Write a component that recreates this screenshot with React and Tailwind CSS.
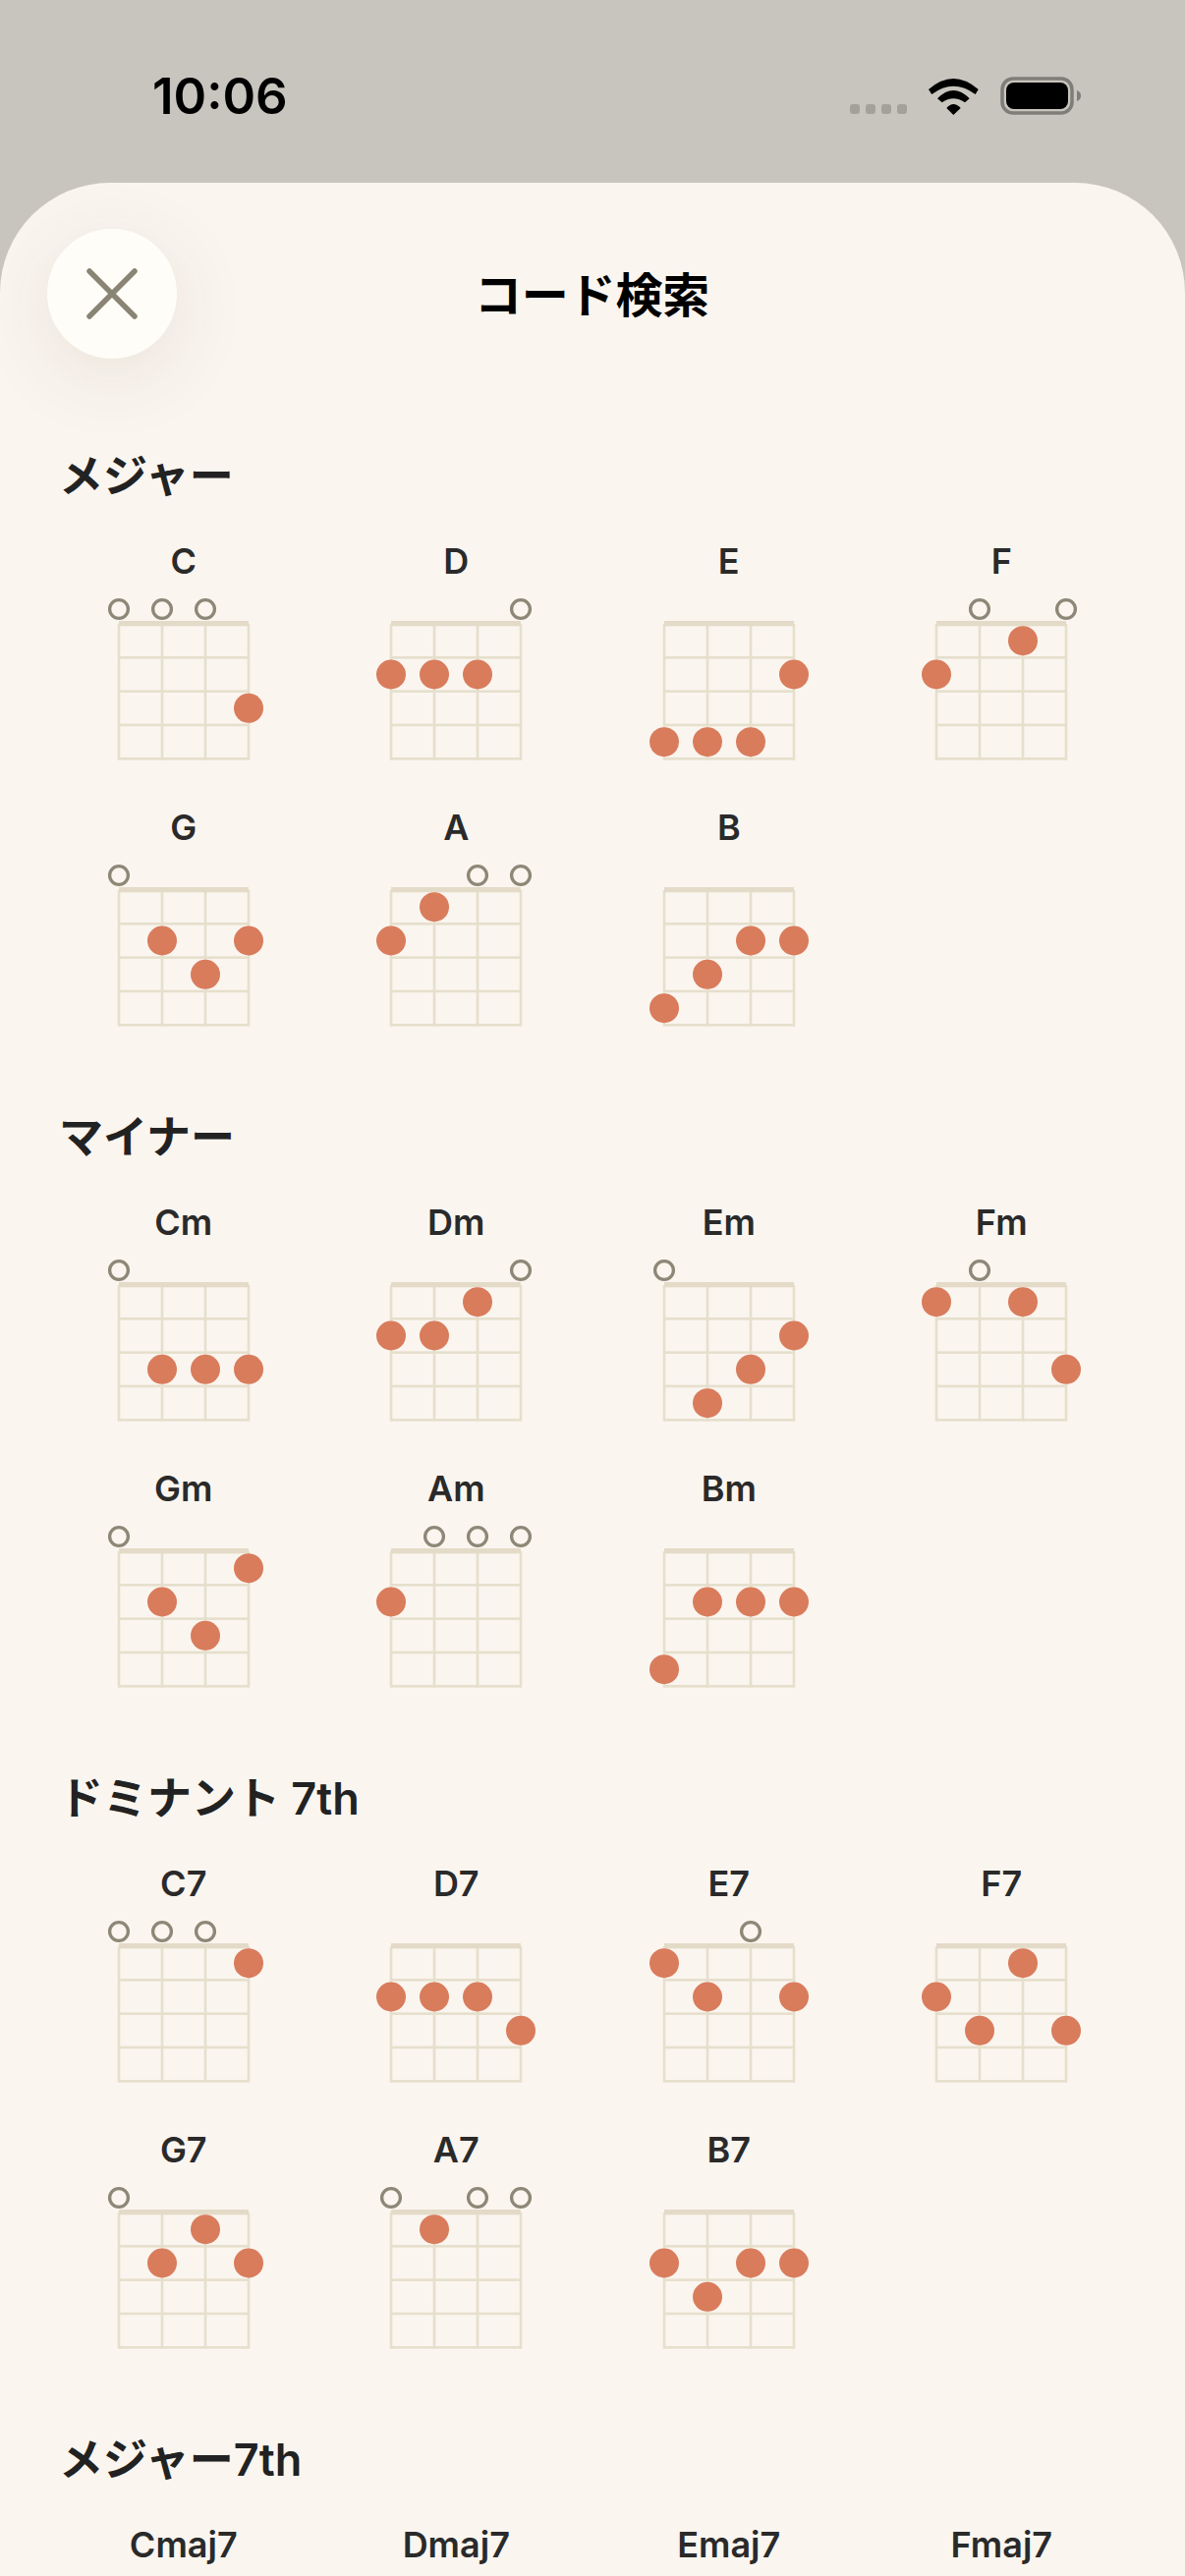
import React from 'react'

const sections = [
  {
    title: 'メジャー',
    chords: [
      ['C', '0003'], ['D', '2220'], ['E', '4442'], ['F', '2010'],
      ['G', '0232'], ['A', '2100'], ['B', '4322'],
    ],
  },
  {
    title: 'マイナー',
    chords: [
      ['Cm', '0333'], ['Dm', '2210'], ['Em', '0432'], ['Fm', '1013'],
      ['Gm', '0231'], ['Am', '2000'], ['Bm', '4222'],
    ],
  },
  {
    title: 'ドミナント 7th',
    chords: [
      ['C7', '0001'], ['D7', '2223'], ['E7', '1202'], ['F7', '2313'],
      ['G7', '0212'], ['A7', '0100'], ['B7', '2322'],
    ],
  },
  {
    title: 'メジャー7th',
    chords: [
      ['Cmaj7', '0002'], ['Dmaj7', '2224'], ['Emaj7', '1302'], ['Fmaj7', '2413'],
    ],
  },
]

const LEFT = 34
const TOP = 29
const CELL_W = 44
const CELL_H = 34.33

const ChordDiagram = ({ frets }) => (
  <svg className="block mx-auto mt-[12px]" width="200" height="190" viewBox="0 0 200 190">
    {[0, 1, 2, 3].map((i) => (
      <rect key={i} x={LEFT + i * CELL_W - 1.3} y={TOP} width="2.6" height={CELL_H * 4 + 1.3} fill="#e6dfcc" />
    ))}
    {[1, 2, 3, 4].map((i) => (
      <rect key={i} x={LEFT} y={TOP + i * CELL_H - 1.3} width={CELL_W * 3} height="2.6" fill="#e6dfcc" />
    ))}
    <rect x={LEFT} y={TOP - 3} width={CELL_W * 3} height="5.3" fill="#e3dbc7" />
    {frets.split('').map((f, s) =>
      f === '0' ? (
        <circle key={s} cx={LEFT + s * CELL_W} cy="14" r="9.4" fill="none" stroke="#8c8776" strokeWidth="3.3" />
      ) : (
        <circle key={s} cx={LEFT + s * CELL_W} cy={TOP + (Number(f) - 0.5) * CELL_H} r="15" fill="#d97c5c" />
      )
    )}
  </svg>
)

const WifiIcon = () => (
  <svg width="51" height="38" viewBox="0 0 51 38" fill="#000">
    <path d="M0 12Q25.3 -10 50.7 12L47.7 17Q25.3 0.4 3.3 17Z" />
    <path d="M9 21.3Q25.3 4.7 41.7 21.3L37 25.3Q25.3 17.3 13.7 25.3Z" />
    <path d="M18.3 31Q25.3 23 32.7 31L25.3 38Z" />
  </svg>
)

const BatteryIcon = () => (
  <svg width="82" height="39" viewBox="0 0 82 39">
    <rect x="2" y="2" width="71" height="35" rx="11" fill="none" stroke="#7f7d78" strokeWidth="3.5" />
    <rect x="6" y="6" width="63" height="27" rx="8" fill="#000" />
    <path d="M78 14C81 15 82 17 82 19.5C82 22 81 24 78 25Z" fill="#7f7d78" />
  </svg>
)

export default function App() {
  return (
    <div
      className="h-[2622px] w-[1206px] overflow-hidden bg-[#c8c5be]"
      style={{ fontFamily: 'Inter, "Noto Sans CJK JP", sans-serif' }}
    >
      {/* Status bar */}
      <div className="h-[186px] pt-[70px] pl-[155px] pr-[106px]">
        <div className="flex h-[55px] items-center justify-between">
          <span className="text-[51px] font-semibold leading-none text-black">10:06</span>
          <div className="flex items-end gap-[22px]">
            <div className="flex gap-[6px] pb-[1px]">
              <span className="h-[10px] w-[10px] rounded-[3px] bg-[#a3a199]" />
              <span className="h-[10px] w-[10px] rounded-[3px] bg-[#a3a199]" />
              <span className="h-[10px] w-[10px] rounded-[3px] bg-[#a3a199]" />
              <span className="h-[10px] w-[10px] rounded-[3px] bg-[#a3a199]" />
            </div>
            <WifiIcon />
            <BatteryIcon />
          </div>
        </div>
      </div>

      {/* Sheet */}
      <div className="h-[2436px] overflow-hidden rounded-t-[112px] bg-[#faf5ef]">
        <div className="relative flex h-[269px] justify-center pt-[49px]">
          <button className="absolute left-[48px] top-[47px] flex h-[132px] w-[132px] items-center justify-center rounded-full bg-[#fffdf8] shadow-[0_16px_80px_rgba(70,60,30,0.1)]">
            <svg width="52" height="52" viewBox="0 0 52 52" stroke="#8a8474" strokeWidth="5.5" strokeLinecap="round">
              <path d="M3 3L49 49M49 3L3 49" />
            </svg>
          </button>
          <h1 className="flex h-[132px] items-center pr-[1px] text-[48px] font-bold tracking-[-0.2px] text-black">コード検索</h1>
        </div>

        <div className="px-[48px]">
          {sections.map((section) => (
            <section key={section.title} className="pb-[36px]">
              <h2 className="mb-[35px] h-[60px] pl-[12px] text-[45px] font-semibold leading-[60px] text-[#222]">
                {section.title}
              </h2>
              <div className="grid grid-cols-4">
                {section.chords.map(([name, frets]) => (
                  <div key={name} className="h-[271px]">
                    <div className="h-[44px] -translate-y-[1px] text-center text-[36px] font-semibold leading-[44px] text-[#2a2a2a]">
                      {name}
                    </div>
                    <ChordDiagram frets={frets} />
                  </div>
                ))}
              </div>
            </section>
          ))}
        </div>
      </div>
    </div>
  )
}
